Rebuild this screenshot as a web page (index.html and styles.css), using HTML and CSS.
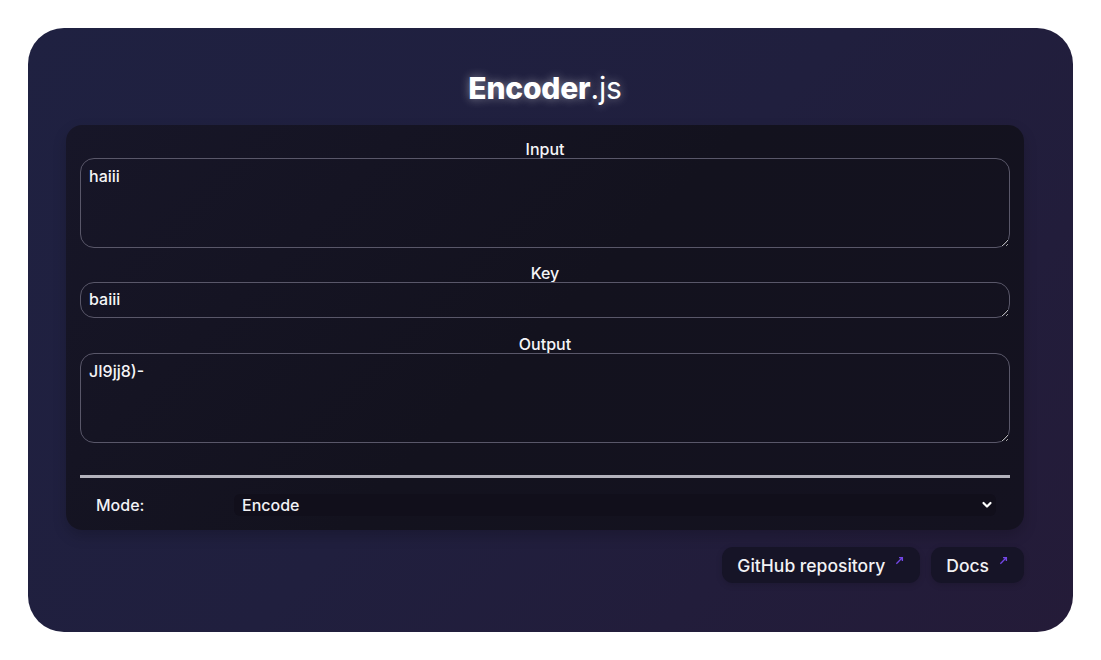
FILE: index.html
```html
<!DOCTYPE html>
<html lang="en">
<head>
<meta charset="utf-8">
<title>Encoder.js</title>
<link rel="stylesheet" href="styles.css">
</head>
<body>
<main class="card">
  <h1 class="title"><b>Encoder</b>.js</h1>
  <section class="panel">
    <label class="label" for="input">Input</label>
    <textarea id="input" class="field area">haiii</textarea>
    <label class="label" for="key">Key</label>
    <textarea id="key" class="field key">baiii</textarea>
    <label class="label" for="output">Output</label>
    <textarea id="output" class="field area last">JI9jj8)-</textarea>
    <hr class="rule">
    <div class="mode">
      <span class="mode-label">Mode:</span>
      <div class="select">
        <span>Encode</span>
        <svg class="chev" viewBox="0 0 12 12" width="12" height="12"><path d="M2.5 4 L6 7.5 L9.5 4" fill="none" stroke="#fff" stroke-width="2.2" stroke-linecap="round" stroke-linejoin="round"/></svg>
      </div>
    </div>
  </section>
  <nav class="links">
    <a class="btn" href="#">GitHub repository <svg class="arr" viewBox="0 0 10 10" width="10" height="10"><path d="M1.5 8.5 L8 2 M4.5 1.8 H8.2 V5.5" fill="none" stroke="#7346e6" stroke-width="1.5"/></svg></a>
    <a class="btn" href="#">Docs <svg class="arr" viewBox="0 0 10 10" width="10" height="10"><path d="M1.5 8.5 L8 2 M4.5 1.8 H8.2 V5.5" fill="none" stroke="#7346e6" stroke-width="1.5"/></svg></a>
  </nav>
</main>
</body>
</html>
```
FILE: styles.css
```css
* { box-sizing: border-box; }
html, body { margin: 0; background: #fff; }
body {
  padding: 28px;
  font-family: Inter, "Noto Sans", sans-serif;
  color: #f2f2f5;
}
.card {
  width: 1045px;
  height: 604px;
  border-radius: 36px;
  background: linear-gradient(135deg, #1f2141 0%, #201f3e 50%, #241b38 100%);
  padding: 40px 49px 0 38px;
  display: flex;
  flex-direction: column;
}
.title {
  margin: 0 0 17px;
  height: 40px;
  line-height: 40px;
  text-align: center;
  font-size: 30px;
  font-weight: 400;
  color: #fff;
  text-shadow: 0 0 10px rgba(255,255,255,0.45);
  letter-spacing: -0.2px;
}
.title b { font-weight: 800; }
.panel {
  width: 958px;
  height: 405px;
  background: linear-gradient(135deg, #171628 0%, #13121e 50%, #141220 100%);
  border-radius: 16px;
  padding: 15px 14px 14px 14px;
  display: flex;
  flex-direction: column;
  box-shadow: 0 6px 14px rgba(0,0,0,0.18);
}
.label {
  display: block;
  text-align: center;
  font-size: 16px;
  line-height: 18px;
  font-weight: 500;
  color: #f5f5f7;
}
.field {
  display: block;
  width: 930px;
  background: transparent;
  border: 1px solid #595769;
  border-radius: 14px;
  color: #f5f5f7;
  font-family: Inter, "Noto Sans", sans-serif;
  font-size: 16px;
  font-weight: 500;
  line-height: 20px;
  padding: 7px 8px;
  resize: vertical;
  outline: none;
}
.area { height: 90px; margin-bottom: 16px; }
.key { height: 36px; padding-top: 6px; margin-bottom: 17px; overflow: hidden; }
.area.last { margin-bottom: 0; }
.rule {
  margin: 32px 0 16px;
  border: 0;
  height: 3px;
  flex: none;
  background: #b3b2bc;
}
.mode {
  display: flex;
  align-items: center;
  padding-left: 16px;
  padding-right: 14px;
  height: 22px;
}
.mode-label {
  width: 138px;
  font-size: 16px;
  font-weight: 500;
}
.select {
  flex: 1;
  height: 22px;
  background: #110f1b;
  border-radius: 6px;
  display: flex;
  align-items: center;
  justify-content: space-between;
  padding: 0 3px 0 8px;
  font-size: 16px;
  font-weight: 500;
}
.chev { display: block; }
.links {
  display: flex;
  justify-content: flex-end;
  gap: 11px;
  width: 958px;
  margin-top: 17px;
}
.btn {
  height: 36px;
  display: flex;
  align-items: center;
  padding: 0 16px 0 15px;
  background: #161427;
  border-radius: 11px;
  color: #f2f2f5;
  text-decoration: none;
  font-size: 17.5px;
  font-weight: 500;
  box-shadow: 0 2px 6px rgba(0,0,0,0.15);
}
.arr { margin-left: 10px; margin-top: -9px; width: 9px; height: 9px; }
```
